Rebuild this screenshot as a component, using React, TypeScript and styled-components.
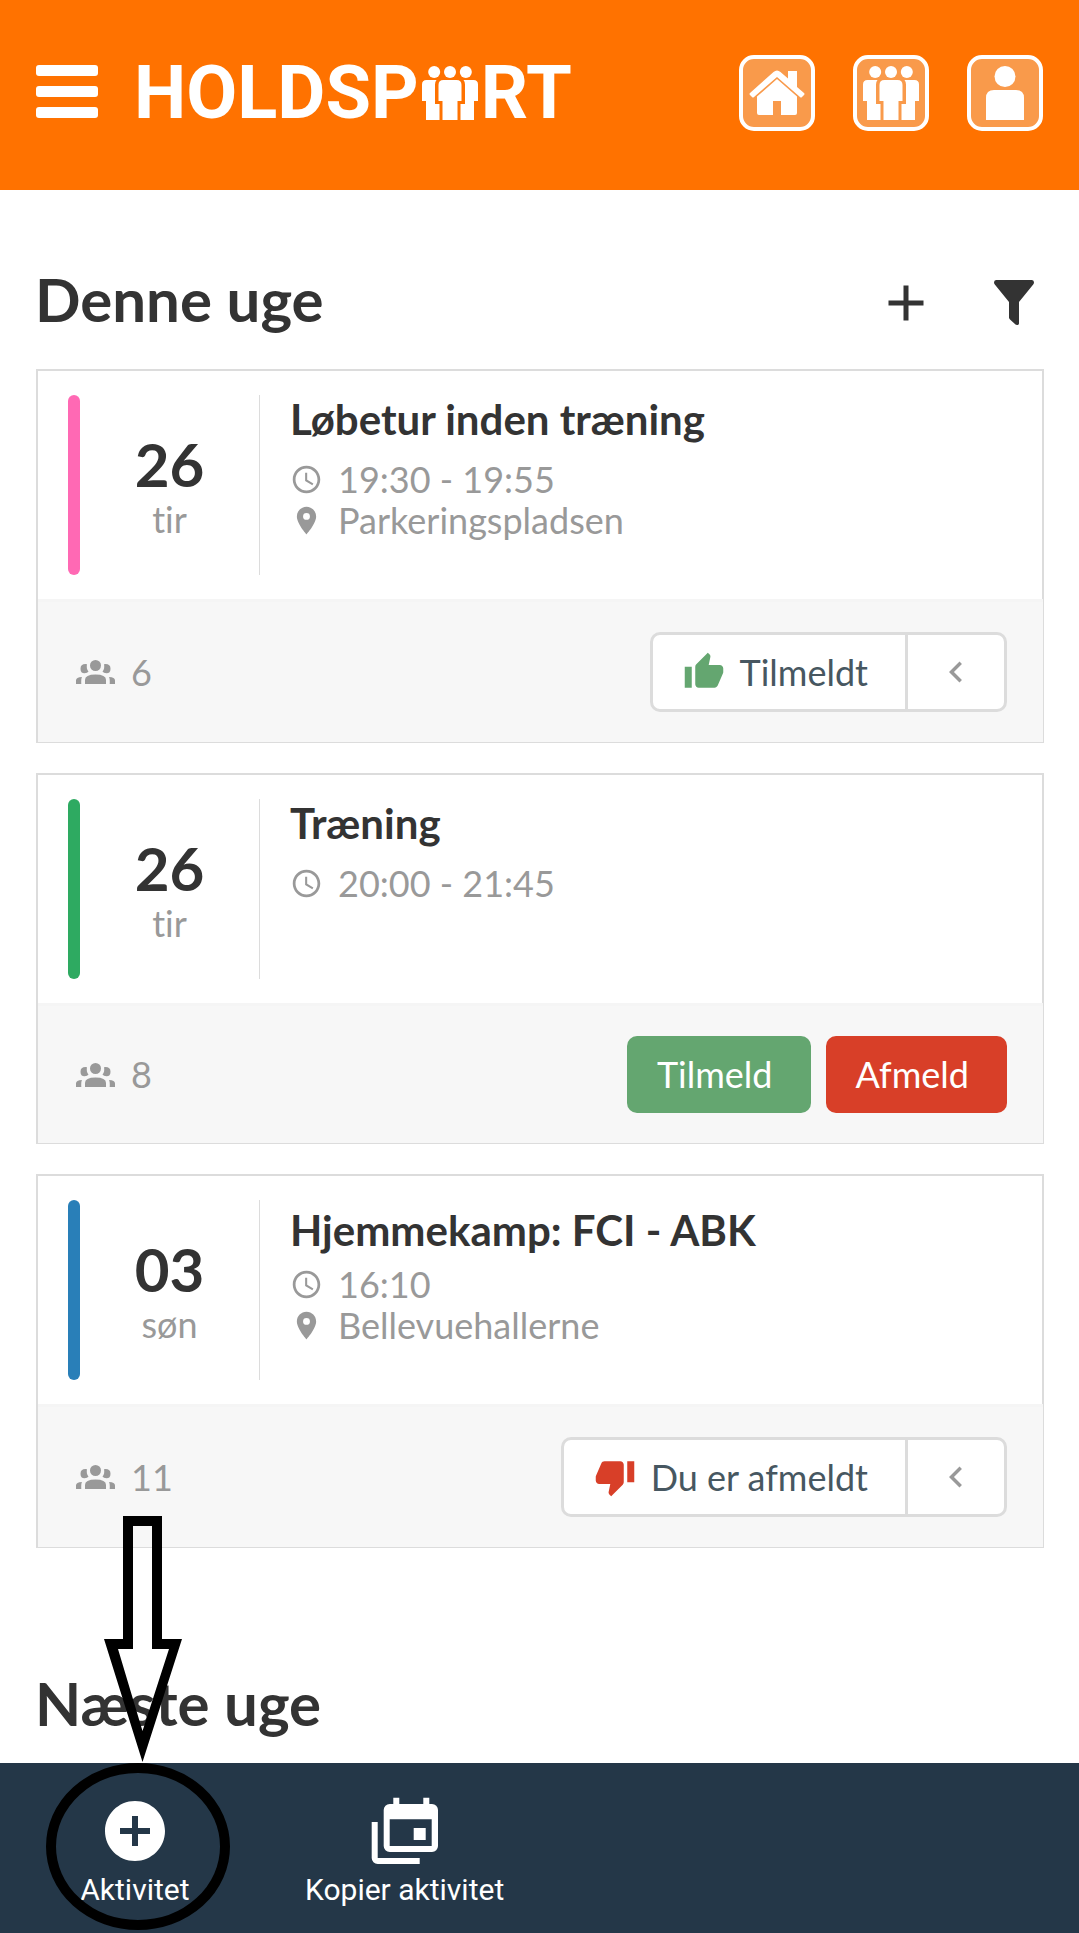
import React from 'react';
import styled, { createGlobalStyle } from 'styled-components';
import {
  MdAdd,
  MdAddCircle,
  MdChevronLeft,
  MdPlace,
  MdSchedule,
  MdThumbDown,
  MdThumbUp,
} from 'react-icons/md';

const GlobalStyle = createGlobalStyle`
  *, *::before, *::after { box-sizing: border-box; }
  body {
    margin: 0;
    background: #fff;
    color: #333;
    font-family: Lato, "Open Sans", sans-serif;
    font-size: 36px;
    line-height: 41px;
    font-variant-ligatures: none;
  }
  h1, h2, h3, p, ul { margin: 0; padding: 0; }
  ul { list-style: none; }
  button { font: inherit; color: inherit; margin: 0; cursor: pointer; }
  svg { display: block; flex: none; }
`;

const Page = styled.div`
  display: flex;
  flex-direction: column;
  min-height: 100vh;
`;

const TopBar = styled.header`
  display: flex;
  align-items: center;
  height: 190px;
  padding: 0 36px 4px;
  background: #ff7200;
  color: #fff;
`;

const MenuButton = styled.button`
  display: flex;
  flex-direction: column;
  gap: 10px;
  width: 62px;
  padding: 0 0 4px;
  border: 0;
  background: none;
`;

const MenuBar = styled.span`
  height: 11px;
  border-radius: 3px;
  background: #fff;
`;

const Logo = styled.a`
  display: flex;
  align-items: center;
  gap: 3px;
  margin-left: 36px;
  color: #fff;
  font: 700 74px/76px Roboto, sans-serif;
  text-decoration: none;
`;

const TopLinks = styled.nav`
  display: flex;
  gap: 38px;
  margin-left: auto;
`;

const TopLink = styled.a`
  display: flex;
  align-items: center;
  justify-content: center;
  width: 76px;
  height: 76px;
  border: 4px solid #fff;
  border-radius: 15px;
  background: #f99a4b;
  color: #fff;
`;

const Main = styled.main`
  display: flex;
  flex-direction: column;
  padding: 0 35px;
`;

const WeekHeader = styled.div`
  display: flex;
  align-items: center;
  justify-content: space-between;
  height: 133px;
  margin-top: 46px;
`;

const NextWeekHeader = styled(WeekHeader)`
  height: 112px;
  margin-top: 103px;
`;

const WeekTitle = styled.h2`
  padding-bottom: 8px;
  font-size: 60px;
  line-height: 72px;
`;

const Tools = styled.div`
  display: flex;
  align-items: center;
  gap: 48px;
`;

const ToolButton = styled.button`
  display: flex;
  align-items: center;
  justify-content: center;
  width: 60px;
  height: 60px;
  padding: 0;
  border: 0;
  background: none;
`;

const CardList = styled.ul`
  display: flex;
  flex-direction: column;
  gap: 30px;
`;

const Card = styled.li`
  display: flex;
  flex-direction: column;
  border: solid #dcdcdc;
  border-width: 2px 1px 1px 2px;
  margin-left: 1px;
`;

const CardBody = styled.div`
  display: flex;
  padding: 24px 30px;
  box-shadow: inset -1px 0 #dcdcdc;
`;

const Stripe = styled.span<{ $color: string }>`
  width: 12px;
  border-radius: 6px;
  background: ${(p) => p.$color};
`;

const DateBox = styled.div`
  display: flex;
  flex-direction: column;
  align-items: center;
  justify-content: center;
  width: 180px;
  height: 180px;
  border-right: 1px solid #dcdcdc;
`;

const Day = styled.strong`
  font-size: 60px;
  line-height: 68px;
`;

const Weekday = styled.span`
  color: #999;
  line-height: 42px;
`;

const Info = styled.div`
  display: flex;
  flex-direction: column;
  padding-left: 30px;
`;

const EventTitle = styled.h3<{ $match?: boolean }>`
  margin-bottom: ${(p) => (p.$match ? 4 : 16)}px;
  font-size: 42px;
  line-height: ${(p) => (p.$match ? 60 : 48)}px;
`;

const Detail = styled.p`
  display: flex;
  align-items: center;
  gap: 15px;
  color: #999;
`;

const CardFooter = styled.div`
  display: flex;
  align-items: center;
  justify-content: space-between;
  padding: 30px 36px 30px 38px;
  border-top: 3px solid #f5f5f5;
  background: #f7f7f7;
`;

const Attendees = styled.div`
  display: flex;
  align-items: center;
  gap: 16px;
  color: #999;
`;

const Actions = styled.div`
  display: flex;
  gap: 15px;
`;

const Action = styled.button<{ $color: string }>`
  height: 77px;
  padding: 0 38px 0 30px;
  border: 0;
  border-radius: 10px;
  background: ${(p) => p.$color};
  color: #fff;
`;

const Split = styled.div`
  display: flex;
  height: 80px;
  border: 3px solid #dcdcdc;
  border-radius: 10px;
  background: #fff;
`;

const StatusButton = styled.button`
  display: flex;
  align-items: center;
  gap: 15px;
  padding: 0 37px 0 30px;
  border: 0;
  background: none;
  color: #475761;
`;

const ExpandButton = styled.button`
  display: flex;
  align-items: center;
  justify-content: center;
  width: 99px;
  padding: 0;
  border: 0;
  border-left: 3px solid #dcdcdc;
  background: none;
  color: #999;
`;

const BottomBar = styled.nav`
  display: grid;
  grid-template-columns: repeat(4, 1fr);
  height: 170px;
  margin-top: auto;
  background: #243748;
  color: #fff;
`;

const BottomItem = styled.div`
  position: relative;
`;

const BottomButton = styled.button`
  display: flex;
  flex-direction: column;
  align-items: center;
  gap: 5px;
  width: 100%;
  height: 170px;
  padding: 32px 0 0;
  border: 0;
  background: none;
  font: 400 30px/36px Roboto, sans-serif;
  white-space: nowrap;
`;

const Pointer = styled.svg`
  position: absolute;
  left: 0;
  bottom: 0;
  pointer-events: none;
`;

const GroupFigure = () => (
  <svg width="56" height="54" viewBox="0 0 56 54" fill="currentColor" aria-hidden="true">
    <circle cx="12.2" cy="6" r="6" />
    <circle cx="28" cy="6" r="6" />
    <circle cx="43.8" cy="6" r="6" />
    <path d="M4.5 14H14.500q-1.500 1.500-1.500 4.500V38h4.500V54H4V35H0V18.500Q0 14 4.500 14Z" />
    <path d="M51.500 14H41.500q1.500 1.500 1.500 4.500V38h-4.500V54H52V35h4V18.500Q56 14 51.500 14Z" />
    <path d="M21.500 14h13Q39.500 14 39.500 19V35H35.500V54H20.500V35H16.500V19q0-5 5-5Z" />
  </svg>
);

const HomeFigure = () => (
  <svg width="56" height="46" viewBox="0 0 56 46" fill="currentColor" aria-hidden="true">
    <path d="M1 23 24.500 2q3.500-3 7 0L39 8.500V1h9v16l7 6q1 1 0 2l-2 2q-1 1-2 0L28 7 5 27q-1 1-2 0l-2-2q-1-1 0-2Z" />
    <path d="M28 9 48 26.500V43q0 2-2 2H32V31H24V45H10q-2 0-2-2V26.500Z" />
  </svg>
);

const PersonFigure = () => (
  <svg width="38" height="54" viewBox="0 0 38 54" fill="currentColor" aria-hidden="true">
    <circle cx="19" cy="10.500" r="10.500" />
    <path d="M8 24H30q8 0 8 8V54H0V32q0-8 8-8Z" />
  </svg>
);

const FilterIcon = () => (
  <svg width="40" height="45" viewBox="0 0 40 45" fill="#333" aria-hidden="true">
    <path d="M2 0H38q2 0 2 2.500 0 1-.8 2L25 22V43.500q-.5 2.500-3.500 1L16 39.500Q15 38.500 15 37.500V22L.8 4.500Q0 3.500 0 2.500 0 0 2 0Z" />
  </svg>
);

const PeopleIcon = () => (
  <svg width="39" height="24" viewBox="0 0 39 24" fill="currentColor" aria-hidden="true">
    <circle cx="19.500" cy="5.500" r="5.500" />
    <path d="M9 20q0-5.500 10.500-5.500T30 20v4H9Z" />
    <path d="M11 4.200Q4.500 3.500 4.500 8.700q0 4.500 4 4.500 3 0 4-1.700-2.500-3-1.500-7.300Z" />
    <path d="M28 4.200q6.500-.7 6.500 4.500 0 4.500-4 4.500-3 0-4-1.700 2.500-3 1.500-7.300Z" />
    <path d="M0 24V20.500Q0 17 6 17 5 18.500 5.300 24ZM39 24V20.500Q39 17 33 17q1 1.500.7 7Z" />
  </svg>
);

const CopyEventIcon = () => (
  <svg width="72" height="72" viewBox="0 0 24 24" fill="currentColor" aria-hidden="true">
    <path d="M21 3H20.100V.9H18.100V3H10.100V.9H8.100V3H6.900a2 2 0 0 0-2 2V17a2 2 0 0 0 2 2H21a2 2 0 0 0 2-2V5a2 2 0 0 0-2-2ZM20.900 17H6.900V8.100H20.900Z" />
    <path d="M14.900 11h4v4h-4ZM.9 9h2V21H16.900v2H2.900a2 2 0 0 1-2-2Z" />
  </svg>
);

type Activity = {
  day: string;
  weekday: string;
  color: string;
  title: string;
  time: string;
  place?: string;
  attendees: number;
  status?: 'joined' | 'declined';
  match?: boolean;
};

const activities: Activity[] = [
  { day: '26', weekday: 'tir', color: '#ff69b4', title: 'Løbetur inden træning', time: '19:30 - 19:55', place: 'Parkeringspladsen', attendees: 6, status: 'joined' },
  { day: '26', weekday: 'tir', color: '#2eaa61', title: 'Træning', time: '20:00 - 21:45', attendees: 8 },
  { day: '03', weekday: 'søn', color: '#297fb8', title: 'Hjemmekamp: FCI - ABK', time: '16:10', place: 'Bellevuehallerne', attendees: 11, status: 'declined', match: true },
];

const ActivityCard = ({ activity: a }: { activity: Activity }) => (
  <Card>
    <CardBody>
      <Stripe $color={a.color} />
      <DateBox>
        <Day>{a.day}</Day>
        <Weekday>{a.weekday}</Weekday>
      </DateBox>
      <Info>
        <EventTitle $match={a.match}>{a.title}</EventTitle>
        <Detail><MdSchedule size={33} />{a.time}</Detail>
        {a.place && <Detail><MdPlace size={33} />{a.place}</Detail>}
      </Info>
    </CardBody>
    <CardFooter>
      <Attendees><PeopleIcon />{a.attendees}</Attendees>
      {a.status ? (
        <Split>
          <StatusButton type="button">
            {a.status === 'joined' ? <MdThumbUp size={42} color="#64a670" /> : <MdThumbDown size={42} color="#d83f28" />}
            {a.status === 'joined' ? 'Tilmeldt' : 'Du er afmeldt'}
          </StatusButton>
          <ExpandButton type="button" aria-label="Vis valg"><MdChevronLeft size={42} /></ExpandButton>
        </Split>
      ) : (
        <Actions>
          <Action type="button" $color="#64a670">Tilmeld</Action>
          <Action type="button" $color="#d83f28">Afmeld</Action>
        </Actions>
      )}
    </CardFooter>
  </Card>
);

export default function App() {
  return (
    <Page>
      <GlobalStyle />
      <TopBar>
        <MenuButton type="button" aria-label="Menu"><MenuBar /><MenuBar /><MenuBar /></MenuButton>
        <Logo href="#" aria-label="Holdsport">
          <span>HOLDSP</span>
          <GroupFigure />
          <span>RT</span>
        </Logo>
        <TopLinks>
          <TopLink href="#" aria-label="Forside"><HomeFigure /></TopLink>
          <TopLink href="#" aria-label="Hold"><GroupFigure /></TopLink>
          <TopLink href="#" aria-label="Profil"><PersonFigure /></TopLink>
        </TopLinks>
      </TopBar>
      <Main>
        <WeekHeader>
          <WeekTitle>Denne uge</WeekTitle>
          <Tools>
            <ToolButton type="button" aria-label="Tilføj"><MdAdd size={60} /></ToolButton>
            <ToolButton type="button" aria-label="Filtrer"><FilterIcon /></ToolButton>
          </Tools>
        </WeekHeader>
        <CardList>
          {activities.map((a) => <ActivityCard key={a.title} activity={a} />)}
        </CardList>
        <NextWeekHeader><WeekTitle>Næste uge</WeekTitle></NextWeekHeader>
      </Main>
      <BottomBar>
        <BottomItem>
          <BottomButton type="button"><MdAddCircle size={72} />Aktivitet</BottomButton>
          <Pointer width="270" height="420" viewBox="0 0 270 420" aria-hidden="true">
            <path fillRule="evenodd" d="M123 3H162V126H182L142.500 249 104 126H123ZM133 13V136H118L142.500 218 169 136H152V13Z" />
            <ellipse cx="138" cy="333.500" rx="87" ry="78.500" fill="none" stroke="#000" strokeWidth="10" />
          </Pointer>
        </BottomItem>
        <BottomItem>
          <BottomButton type="button"><CopyEventIcon />Kopier aktivitet</BottomButton>
        </BottomItem>
      </BottomBar>
    </Page>
  );
}
